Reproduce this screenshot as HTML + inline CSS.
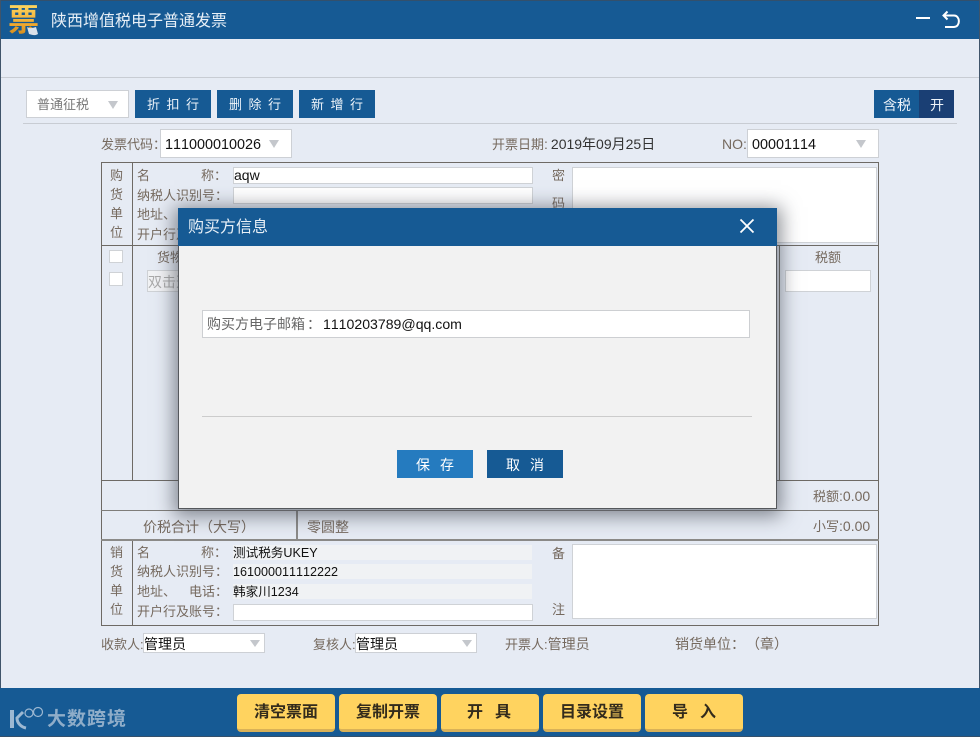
<!DOCTYPE html>
<html lang="zh">
<head>
<meta charset="utf-8">
<title>陕西增值税电子普通发票</title>
<style>
html,body{margin:0;padding:0}
body{width:980px;height:737px;overflow:hidden;position:relative;background:#e6ebf4;font-family:"Liberation Sans","Noto Sans CJK SC",sans-serif;font-size:13px;color:#75695e;font-kerning:none}
.a{position:absolute;white-space:nowrap}
.t{position:absolute;white-space:nowrap;line-height:18px;height:18px}
.v{font-size:14px}
.b{position:absolute;background:#165a94;color:#eef4fa;font-size:13px;line-height:30px;height:28px;top:90px;width:76px;box-sizing:border-box;padding-left:12px;letter-spacing:6.500px;overflow:hidden}
.sel{position:absolute;background:#fff;border:1px solid #cdd0d5;box-sizing:border-box;color:#111}
.tri{position:absolute;width:0;height:0;border-left:5.500px solid transparent;border-right:5.500px solid transparent;border-top:8px solid #c4c7cc}
.in{position:absolute;background:#fff;border:1px solid #cfd2d6;box-sizing:border-box;height:17px;color:#111;font-size:14px;line-height:15px}
.ro{position:absolute;background:#f0f2f4;height:15px;width:299px;left:233px;color:#111;font-size:12.600px;line-height:16px}
.l{position:absolute;background:#6e6a65}
.y{position:absolute;top:694px;height:38px;width:98px;box-sizing:border-box;background:#ffd35f;border-bottom:3px solid #d9b157;border-radius:4px;color:#332b1c;font-size:16px;font-weight:bold;text-align:center;line-height:37px}
.cb{position:absolute;left:109px;width:14px;height:13px;box-sizing:border-box;background:#fff;border:1px solid #cfd2d6}
</style>
</head>
<body>
<!-- title bar -->
<div class="a" style="left:0;top:0;width:980px;height:39px;background:#165a94"></div>
<div class="a" style="left:0;top:0;width:980px;height:1px;background:#33506c"></div>
<div class="a" style="left:0;top:0;width:1px;height:737px;background:#40546a"></div>
<div class="a" style="left:979px;top:0;width:1px;height:737px;background:#40546a"></div>
<div class="a" style="left:8px;top:4px;width:31px;height:34px;font-size:31px;line-height:33px;font-weight:bold;background:linear-gradient(#fdd763,#f0a82e 60%,#c98318);-webkit-background-clip:text;background-clip:text;color:transparent">票</div>
<svg class="a" style="left:26px;top:26px" width="13" height="10" viewBox="0 0 13 10"><path d="M1 1C4 3 7 2 10 1L12 8C9 10 6 9 3 8Z" fill="#d9e1ea"/></svg>
<div class="t" style="left:51px;top:12px;font-size:16px;line-height:20px;height:20px;color:#e8f0f7">陕西增值税电子普通发票</div>
<svg class="a" style="left:910px;top:6px" width="60" height="26" viewBox="0 0 60 26"><path d="M6 12H20" stroke="#fff" stroke-width="2" fill="none"/><path d="M37.500 5.500L33.500 9.500L37.500 13.500M33.500 9.500H44C50.500 9.500 50.500 21 44 21H35" stroke="#fff" stroke-width="2" fill="none"/></svg>

<!-- toolbar -->
<div class="l" style="left:1px;top:77px;width:978px;height:1px;background:#c8ccd3"></div>
<div class="sel" style="left:26px;top:90px;width:103px;height:28px;color:#777;line-height:28px;padding-left:10px">普通征税<span class="tri" style="left:81px;top:10px"></span></div>
<div class="b" style="left:135px">折扣行</div>
<div class="b" style="left:217px">删除行</div>
<div class="b" style="left:299px">新增行</div>
<div class="b" style="left:874px;width:45px;letter-spacing:0;font-size:14px;padding-left:9px;line-height:31px">含税</div>
<div class="b" style="left:919px;width:35px;letter-spacing:0;font-size:14px;padding-left:11px;line-height:31px;background:#1a3f74">开</div>
<div class="l" style="left:23px;top:123px;width:934px;height:1px;background:#c8ccd3"></div>

<!-- invoice head -->
<div class="t" style="left:101px;top:136px">发票代码：</div>
<div class="sel" style="left:160px;top:129px;width:132px;height:29px;line-height:30px;font-size:14.400px;padding-left:4px">111000010026<span class="tri" style="left:108px;top:10px"></span></div>
<div class="t" style="left:492px;top:135px">开票日期<span class="v">:</span><span class="v" style="color:#333;margin-left:3px">2019年09月25日</span></div>
<div class="t" style="left:722px;top:135px;font-size:14px">NO:</div>
<div class="sel" style="left:747px;top:129px;width:132px;height:29px;line-height:30px;font-size:14.400px;padding-left:4px">00001114<span class="tri" style="left:108px;top:10px"></span></div>

<!-- table lines -->
<div class="a" style="left:101px;top:162px;width:778px;height:464px;box-sizing:border-box;border:1px solid #6e6a65"></div>
<div class="l" style="left:132px;top:162px;width:1px;height:318px"></div>
<div class="l" style="left:101px;top:245px;width:778px;height:1px"></div>
<div class="l" style="left:101px;top:480px;width:778px;height:1px"></div>
<div class="l" style="left:101px;top:510px;width:778px;height:1px;background:#7f7d7a"></div>
<div class="l" style="left:101px;top:539px;width:778px;height:2px;background:#8b8a88"></div>
<div class="l" style="left:296px;top:511px;width:2px;height:29px;background:#8b8a88"></div>
<div class="l" style="left:132px;top:541px;width:1px;height:84px"></div>
<div class="l" style="left:779px;top:246px;width:1px;height:234px"></div>

<!-- buyer -->
<div class="t" style="left:110px;top:167px">购</div>
<div class="t" style="left:110px;top:186px">货</div>
<div class="t" style="left:110px;top:205px">单</div>
<div class="t" style="left:110px;top:224px">位</div>
<div class="t" style="left:137px;top:167px">名</div><div class="t" style="left:201px;top:167px">称：</div>
<div class="in" style="left:233px;top:167px;width:300px">aqw</div>
<div class="t" style="left:137px;top:187px">纳税人识别号：</div>
<div class="in" style="left:233px;top:187px;width:300px"></div>
<div class="t" style="left:137px;top:206px">地址、</div>
<div class="t" style="left:137px;top:226px">开户行及账号：</div>
<div class="t" style="left:552px;top:167px">密</div>
<div class="t" style="left:552px;top:195px">码</div>
<div class="in" style="left:572px;top:167px;width:305px;height:76px"></div>

<!-- goods -->
<div class="cb" style="top:250px"></div>
<div class="cb" style="top:272px;height:14px"></div>
<div class="t" style="left:157px;top:249px">货物</div>
<div class="a" style="left:147px;top:270px;width:60px;height:22px;background:#f2f3f5;border:1px solid #cfd2d6;box-sizing:border-box;color:#aaa;font-size:14px;line-height:23px">双击选</div>
<div class="t" style="left:815px;top:249px">税额</div>
<div class="a" style="left:785px;top:270px;width:86px;height:22px;background:#fff;border:1px solid #cfd2d6;box-sizing:border-box"></div>
<div class="t" style="left:813px;top:487px">税额<span class="v">:0.00</span></div>

<!-- total -->
<div class="t" style="left:143px;top:518px;font-size:14px">价税合计（大写）</div>
<div class="t" style="left:307px;top:518px;font-size:14px">零圆整</div>
<div class="t" style="left:813px;top:517px">小写<span class="v">:0.00</span></div>

<!-- seller -->
<div class="t" style="left:110px;top:544px">销</div>
<div class="t" style="left:110px;top:563px">货</div>
<div class="t" style="left:110px;top:582px">单</div>
<div class="t" style="left:110px;top:601px">位</div>
<div class="t" style="left:137px;top:544px">名</div><div class="t" style="left:201px;top:544px">称：</div>
<div class="t" style="left:137px;top:563px">纳税人识别号：</div>
<div class="t" style="left:137px;top:583px">地址、</div><div class="t" style="left:189px;top:583px">电话：</div>
<div class="t" style="left:137px;top:603px">开户行及账号：</div>
<div class="ro" style="top:545px">测试税务UKEY</div>
<div class="ro" style="top:564px">161000011112222</div>
<div class="ro" style="top:584px">韩家川1234</div>
<div class="in" style="left:233px;top:604px;width:300px"></div>
<div class="t" style="left:552px;top:545px">备</div>
<div class="t" style="left:552px;top:601px">注</div>
<div class="in" style="left:572px;top:544px;width:305px;height:75px"></div>

<!-- signers -->
<div class="t" style="left:101px;top:636px">收款人:</div>
<div class="sel" style="left:143px;top:633px;width:122px;height:20px;line-height:20px;font-size:14px">管理员<span class="tri" style="left:106px;top:6px;border-left-width:5px;border-right-width:5px;border-top-width:7px"></span></div>
<div class="t" style="left:313px;top:636px">复核人:</div>
<div class="sel" style="left:355px;top:633px;width:122px;height:20px;line-height:20px;font-size:14px">管理员<span class="tri" style="left:106px;top:6px;border-left-width:5px;border-right-width:5px;border-top-width:7px"></span></div>
<div class="t" style="left:505px;top:635px">开票人:<span class="v">管理员</span></div>
<div class="t" style="left:675px;top:635px;font-size:14px">销货单位：</div>
<div class="t" style="left:746px;top:635px;font-size:14px">（章）</div>

<!-- bottom bar -->
<div class="a" style="left:0;top:688px;width:980px;height:49px;background:#165a94"></div>
<div class="a" style="left:0;top:736px;width:980px;height:1px;background:#33506c"></div>
<svg class="a" style="left:8px;top:706px" width="40" height="26" viewBox="0 0 40 26"><path d="M4 4V22" stroke="#9db8d2" stroke-width="4" fill="none"/><path d="M15 6L9 12C9 17 13 21 18 22" stroke="#9db8d2" stroke-width="3" fill="none"/><circle cx="21" cy="7" r="4" stroke="#9db8d2" stroke-width="1.200" fill="none"/><circle cx="30" cy="6" r="4.500" stroke="#9db8d2" stroke-width="1.200" fill="none"/></svg>
<div class="t" style="left:47px;top:708px;font-size:19px;line-height:24px;height:24px;font-weight:bold;color:#8fadc9;letter-spacing:1px">大数跨境</div>
<div class="y" style="left:237px">清空票面</div>
<div class="y" style="left:339px">复制开票</div>
<div class="y" style="left:441px;letter-spacing:12px;text-indent:10px">开具</div>
<div class="y" style="left:543px">目录设置</div>
<div class="y" style="left:645px;letter-spacing:12px;text-indent:12px">导入</div>

<!-- modal -->
<div class="a" style="left:178px;top:208px;width:599px;height:301px;box-sizing:border-box;background:#f2f2f2;border:1px solid #55585c;border-top:0;box-shadow:0 3px 18px 4px rgba(60,65,75,.6)"></div>
<div class="a" style="left:178px;top:208px;width:599px;height:38px;background:#165a94"></div>
<div class="t" style="left:188px;top:218px;font-size:16px;line-height:20px;height:20px;color:#e8f0f7">购买方信息</div>
<svg class="a" style="left:738px;top:218px" width="18" height="16" viewBox="0 0 18 16"><path d="M2.500 1.500L15.500 14.500M15.500 1.500L2.500 14.500" stroke="#fff" stroke-width="1.800" fill="none"/></svg>
<div class="a" style="left:202px;top:310px;width:548px;height:28px;box-sizing:border-box;background:#fff;border:1px solid #cdcfd2"></div>
<div class="t" style="left:207px;top:315px;color:#666;font-size:14px">购买方电子邮箱<span style="margin-left:2px">：</span></div>
<div class="t" style="left:323px;top:315px;color:#111;font-size:14.100px">1110203789@qq.com</div>
<div class="l" style="left:202px;top:416px;width:550px;height:1px;background:#cccccc"></div>
<div class="a" style="left:397px;top:450px;width:76px;height:28px;background:#257bbf;color:#fff;font-size:14px;text-align:center;line-height:30px;letter-spacing:10px;text-indent:10px">保存</div>
<div class="a" style="left:487px;top:450px;width:76px;height:28px;background:#165a94;color:#fff;font-size:14px;text-align:center;line-height:30px;letter-spacing:10px;text-indent:10px">取消</div>
</body>
</html>
